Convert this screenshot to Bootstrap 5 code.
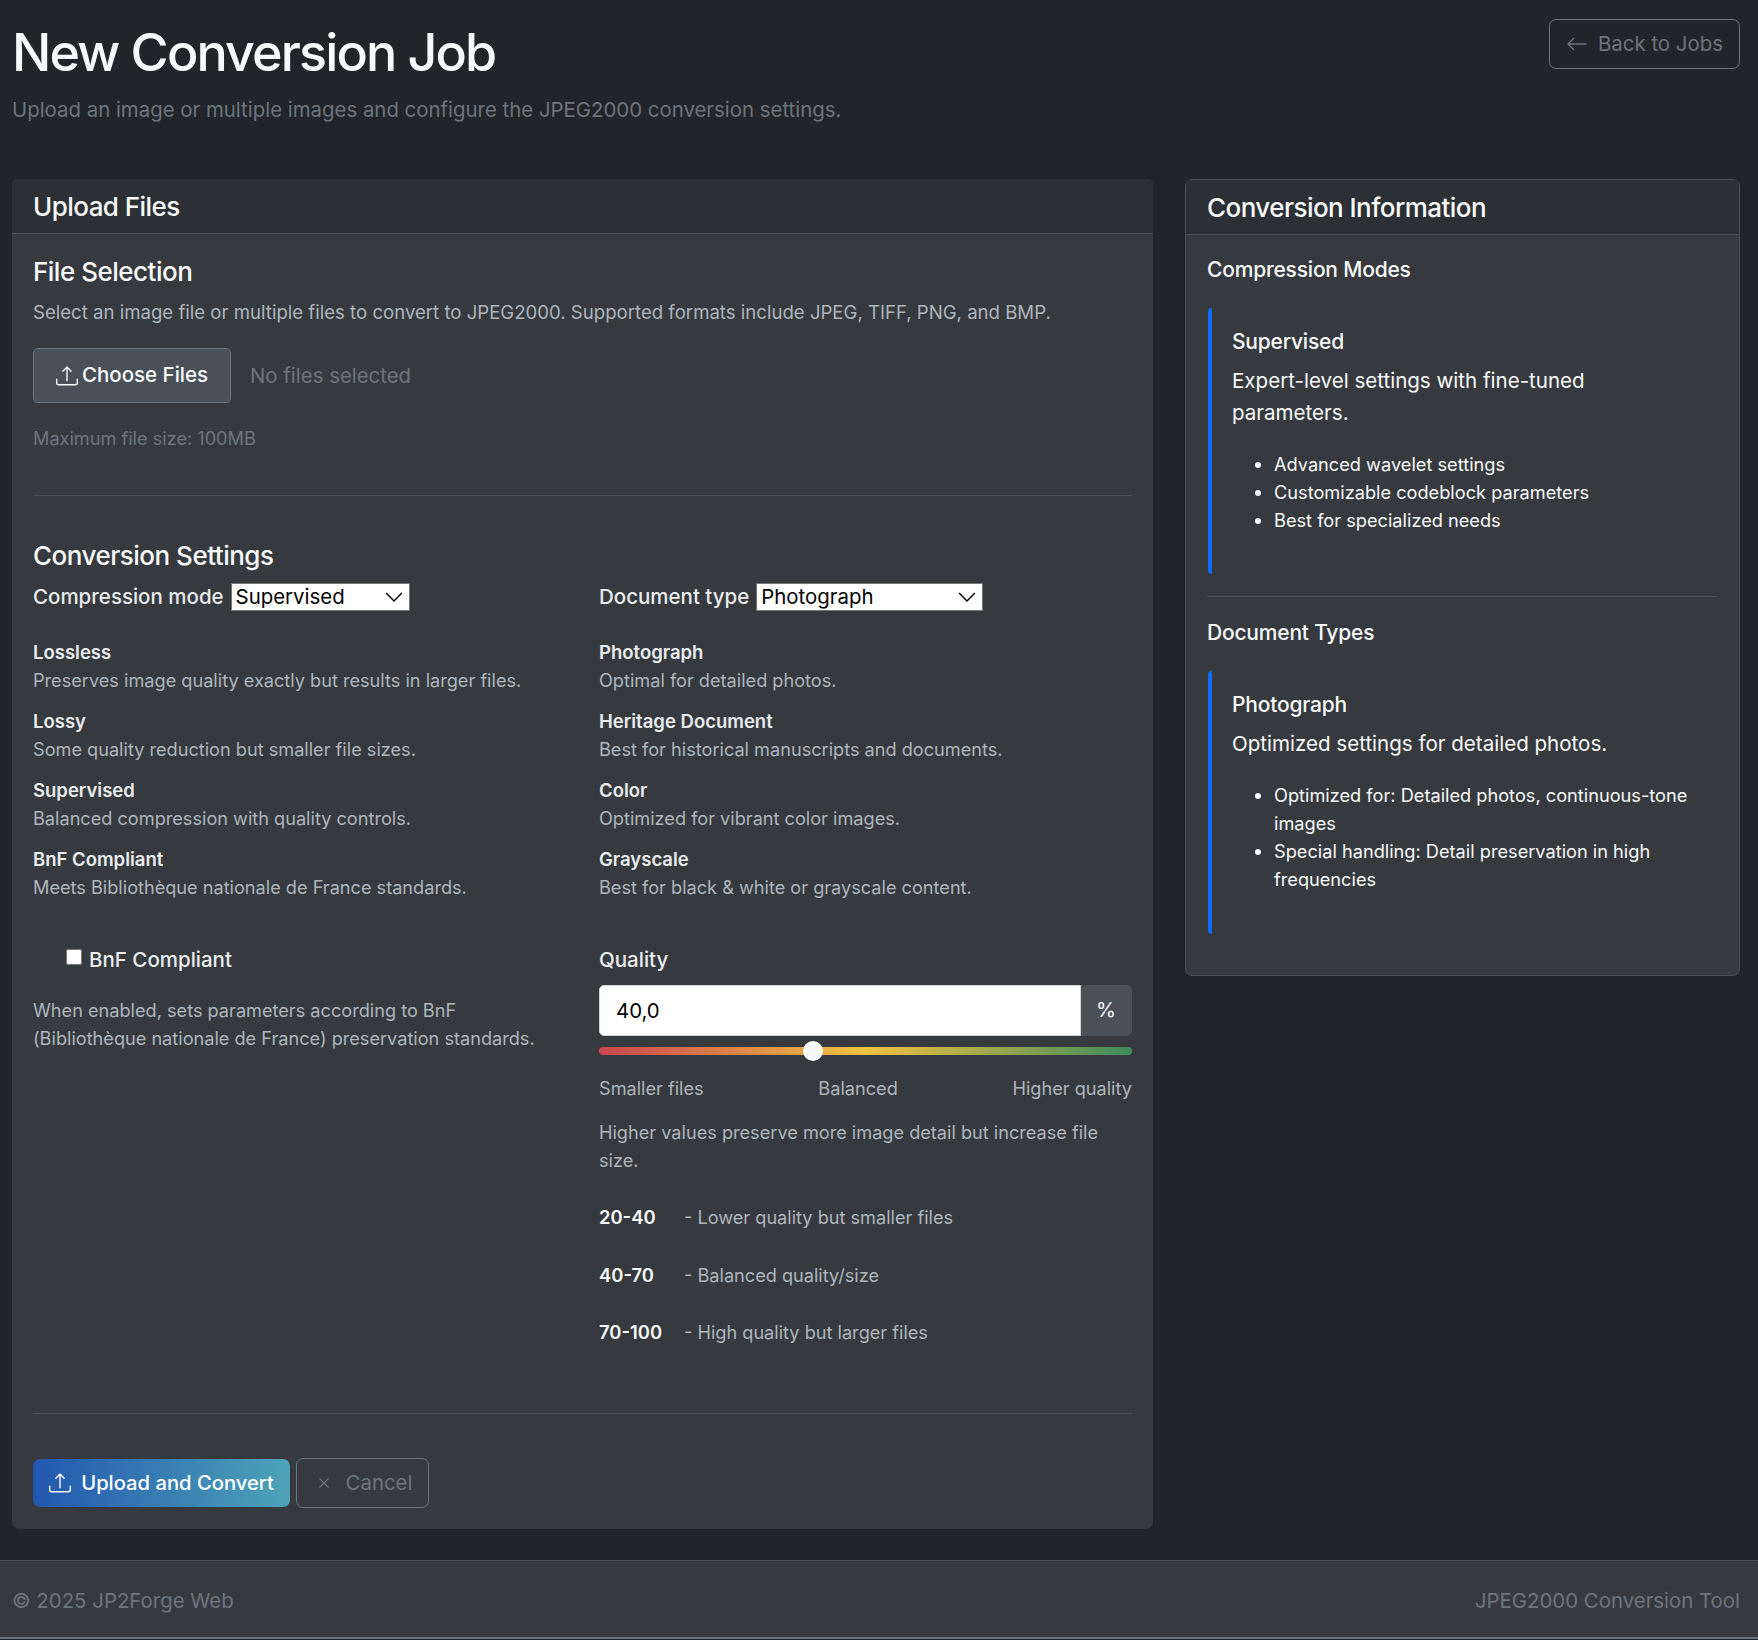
<!DOCTYPE html>
<html lang="en">
<head>
  <meta charset="UTF-8">
  <title>New Conversion Job</title>
  <meta name="viewport" content="width=device-width, initial-scale=1">
  <link href="https://cdn.jsdelivr.net/npm/bootstrap@5.3.0/dist/css/bootstrap.min.css" rel="stylesheet">
  <style>
    body { background: #212428; color: #f8f9fa; font-family: Inter, "Liberation Sans", sans-serif; font-size: 18.15px; line-height: 28px; }
    .page-wrap { padding: 19px 18px 31px 12px; }
    .page-head { height: 160px; }
    .page-title { font-size: 52px; font-weight: 500; line-height: 66px; margin: 1px 0 0; letter-spacing: -1.85px; }
    .page-sub { font-size: 20.4px; line-height: 30px; color: #6c757d; margin-top: 9px; }
    .back-btn { height: 50px; width: 191px; font-size: 20.4px; color: #6c757d; border-color: #6c757d; display: flex; align-items: center; justify-content: center; gap: 10px; border-radius: 7px; padding: 0; }
    .main-grid { display: grid; grid-template-columns: 1141px 555px; gap: 32px; align-items: start; }
    .panel { background: #363a3e; color: #f8f9fa; border-radius: 7px; --bs-card-border-color: transparent; border: 0; }
    .panel-side { border: 1px solid #495057; }
    .panel .card-header { background: #2c3034; border-bottom: 1px solid #495057; height: 55px; padding: 2px 21px 0; display: flex; align-items: center; font-size: 26px; font-weight: 500; letter-spacing: -.55px; }
    .panel .card-body { padding: 0 21px; }
    .sec-title { font-size: 26px; line-height: 32px; font-weight: 500; margin: 0; letter-spacing: -.5px; }
    .muted-text { color: #adb5bd; }
    .dim-text { color: #6c757d; }
    .choose-btn { background: #495057; border: 1px solid #6c757d; color: #f8f9fa; height: 55px; width: 198px; font-size: 20.5px; font-weight: 500; display: flex; align-items: center; justify-content: center; gap: 4px; padding: 0; border-radius: 5px; }
    .choose-btn:hover { background: #495057; color: #f8f9fa; }
    .no-files { font-size: 20.4px; color: #6c757d; margin-left: 3px; }
    .rule { border-top: 1px solid #495057; opacity: 1; margin: 0; }
    .set-label { font-size: 20.5px; font-weight: 500; color: #e9ecef; }
    .plain-select { appearance: none; -webkit-appearance: none; background: #fff url("data:image/svg+xml,%3csvg xmlns='http://www.w3.org/2000/svg' viewBox='0 0 16 16'%3e%3cpath fill='none' stroke='%23000' stroke-width='1.3' d='M1 4.5l7 7 7-7'/%3e%3c/svg%3e") no-repeat right 6px center / 18px 18px; border: 1px solid #767676; color: #000; font-family: Inter, "Liberation Sans", sans-serif; font-size: 20.4px; height: 28px; line-height: 26px; padding: 0 4px; border-radius: 0; margin-left: 7px; }
    .mode-select { width: 179px; }
    .doc-select { width: 227px; }
    .opt-list { margin-top: 27px; }
    .opt-item { height: 69px; }
    .opt-item b { display: block; font-size: 18.5px; font-weight: 600; color: #e9ecef; }
    .check-row { padding-left: 33px; height: 28px; }
    .check-box { width: 16px; height: 16px; margin: 0 7px 8px 0; vertical-align: middle; accent-color: #fff; }
    .quality-input { height: 51px; font-size: 20.4px; background: #fff; color: #000; border-radius: 5px 0 0 5px; border-color: #ced4da; padding-left: 16px; }
    .quality-unit { background: #495057; color: #f8f9fa; border-color: #495057; width: 52px; justify-content: center; font-size: 20.4px; padding: 0; border-radius: 0 5px 5px 0; }
    .quality-range { display: block; width: 100%; height: 20px; margin-top: 5px; appearance: none; -webkit-appearance: none; background: transparent; padding: 0; }
    .quality-range::-webkit-slider-runnable-track { height: 8px; border-radius: 4px; background: linear-gradient(to right, #c9454f, #f0c243 50%, #3f8a5c); }
    .quality-range::-webkit-slider-thumb { -webkit-appearance: none; appearance: none; width: 20px; height: 20px; margin-top: -6px; border-radius: 50%; background: #f8f9fa; border: 0; }
    .range-labels { margin-top: 13px; }
    .tier-row { height: 57.7px; display: flex; }
    .tier-row b { width: 85px; font-size: 18.4px; font-weight: 600; color: #f8f9fa; }
    .go-btn { height: 48px; width: 257px; background: linear-gradient(to right, #2257ae, #4ea3b8); color: #fff; border: 0; font-size: 20.2px; font-weight: 500; display: flex; align-items: center; justify-content: center; gap: 10px; padding: 0; border-radius: 7px; }
    .go-btn:hover { color: #fff; }
    .stop-btn { height: 50px; width: 133px; border: 1px solid #6c757d; color: #6c757d; background: transparent; font-size: 20.4px; display: flex; align-items: center; justify-content: center; gap: 11px; padding: 0; border-radius: 7px; margin-left: 6px; }
    .side-title { font-size: 21px; line-height: 28px; font-weight: 500; margin: 0; letter-spacing: -.2px; }
    .info-box { border-left: 4px solid #0d6efd; border-radius: 4px; padding: 20px 20px 0 20px; margin-left: 1px; }
    .info-box h6 { font-size: 21px; line-height: 28px; font-weight: 500; margin: 0 0 9px; letter-spacing: -.2px; }
    .info-box p { font-size: 20.55px; line-height: 32px; margin: 0 0 21px; }
    .info-box ul { margin: 0 -20px 0 0; padding-left: 42px; font-size: 18.2px; }
    .site-foot { background: #363a3e; border-top: 1px solid #495057; height: 79px; padding: 3px 6px 0 12px; font-size: 20.4px; color: #6c757d; display: flex; align-items: center; justify-content: space-between; border-bottom: 2px solid #6c757d; }
    .site-foot span:last-child { margin-right: 12px; }
    .file-sel { margin-top: 22px; }
    .file-desc { margin-top: 10px; font-size: 18.6px; }
    .file-row { margin-top: 22px; }
    .max-size { margin-top: 21px; }
    .first-rule { margin-top: 43px; }
    .conv-title { margin-top: 44px; }
    .settings-row { margin-top: 11px; display: grid; grid-template-columns: 566px 533px; }
    .left-col { padding-right: 46px; }
    .second-top { margin-top: 32px; }
    .bnf-note { margin-top: 22px; }
    .quality-group { margin-top: 11px; }
    .range-note { margin-top: 16px; }
    .tier-list { margin-top: 29px; }
    .last-rule { margin-top: 37px; }
    .action-row { margin-top: 44px; padding-bottom: 21px; }
    .side-body { padding-top: 21px !important; height: 740px; }
    .box-one { height: 266px; margin-top: 24px; }
    .side-rule { margin-top: 22px; }
    .side-rule + .side-title { margin-top: 22px; }
    .box-two { height: 263px; margin-top: 24px; }
  </style>
</head>
<body>
  <div class="page-wrap">
    <div class="page-head d-flex justify-content-between align-items-start">
      <div>
        <h1 class="page-title">New Conversion Job</h1>
        <div class="page-sub">Upload an image or multiple images and configure the JPEG2000 conversion settings.</div>
      </div>
      <a href="#" class="btn back-btn">
        <svg width="22" height="22" viewBox="0 0 16 16" fill="currentColor"><path fill-rule="evenodd" d="M15 8a.5.5 0 0 0-.5-.5H2.707l3.147-3.146a.5.5 0 1 0-.708-.708l-4 4a.5.5 0 0 0 0 .708l4 4a.5.5 0 0 0 .708-.708L2.707 8.5H14.5A.5.5 0 0 0 15 8z"/></svg>
        Back to Jobs
      </a>
    </div>

    <div class="main-grid">
      <!-- Upload form -->
      <div class="card panel">
        <div class="card-header">Upload Files</div>
        <div class="card-body">
          <h5 class="sec-title file-sel">File Selection</h5>
          <div class="muted-text file-desc">Select an image file or multiple files to convert to JPEG2000. Supported formats include JPEG, TIFF, PNG, and BMP.</div>
          <div class="d-flex align-items-center gap-3 file-row">
            <button class="btn choose-btn" type="button">
              <svg width="22" height="22" viewBox="0 0 16 16" fill="currentColor"><path d="M.5 9.9a.5.5 0 0 1 .5.5v2.5a1 1 0 0 0 1 1h12a1 1 0 0 0 1-1v-2.5a.5.5 0 0 1 1 0v2.5a2 2 0 0 1-2 2H2a2 2 0 0 1-2-2v-2.5a.5.5 0 0 1 .5-.5z"/><path d="M7.646 1.146a.5.5 0 0 1 .708 0l3 3a.5.5 0 0 1-.708.708L8.5 2.707V11.5a.5.5 0 0 1-1 0V2.707L5.354 4.854a.5.5 0 1 1-.708-.708l3-3z"/></svg>
              Choose Files
            </button>
            <span class="no-files">No files selected</span>
          </div>
          <div class="dim-text max-size">Maximum file size: 100MB</div>
          <hr class="rule first-rule">
          <h5 class="sec-title conv-title">Conversion Settings</h5>

          <div class="row g-0 settings-row">
            <div class="left-col">
              <div class="d-flex align-items-center"><span class="set-label">Compression mode</span>
                <select class="plain-select mode-select"><option>Supervised</option></select></div>
              <div class="opt-list">
                <div class="opt-item"><b>Lossless</b><span class="muted-text">Preserves image quality exactly but results in larger files.</span></div>
                <div class="opt-item"><b>Lossy</b><span class="muted-text">Some quality reduction but smaller file sizes.</span></div>
                <div class="opt-item"><b>Supervised</b><span class="muted-text">Balanced compression with quality controls.</span></div>
                <div class="opt-item"><b>BnF Compliant</b><span class="muted-text">Meets Bibliothèque nationale de France standards.</span></div>
              </div>
              <div class="check-row set-label second-top"><input type="checkbox" class="check-box">BnF Compliant</div>
              <div class="muted-text bnf-note">When enabled, sets parameters according to BnF (Bibliothèque nationale de France) preservation standards.</div>
            </div>
            <div class="right-col">
              <div class="d-flex align-items-center"><span class="set-label">Document type</span>
                <select class="plain-select doc-select"><option>Photograph</option></select></div>
              <div class="opt-list">
                <div class="opt-item"><b>Photograph</b><span class="muted-text">Optimal for detailed photos.</span></div>
                <div class="opt-item"><b>Heritage Document</b><span class="muted-text">Best for historical manuscripts and documents.</span></div>
                <div class="opt-item"><b>Color</b><span class="muted-text">Optimized for vibrant color images.</span></div>
                <div class="opt-item"><b>Grayscale</b><span class="muted-text">Best for black &amp; white or grayscale content.</span></div>
              </div>
              <div class="set-label second-top">Quality</div>
              <div class="input-group quality-group">
                <input type="text" class="form-control quality-input" value="40,0">
                <span class="input-group-text quality-unit">%</span>
              </div>
              <input type="range" class="quality-range" min="0" max="100" step="0.1" value="39.7">
              <div class="d-flex justify-content-between muted-text range-labels">
                <span>Smaller files</span><span class="mid-label">Balanced</span><span>Higher quality</span>
              </div>
              <div class="muted-text range-note">Higher values preserve more image detail but increase file size.</div>
              <div class="tier-list">
                <div class="tier-row"><b>20-40</b><span class="muted-text">- Lower quality but smaller files</span></div>
                <div class="tier-row"><b>40-70</b><span class="muted-text">- Balanced quality/size</span></div>
                <div class="tier-row"><b>70-100</b><span class="muted-text">- High quality but larger files</span></div>
              </div>
            </div>
          </div>

          <hr class="rule last-rule">
          <div class="d-flex align-items-center action-row">
            <button class="btn go-btn" type="button">
              <svg width="22" height="22" viewBox="0 0 16 16" fill="currentColor"><path d="M.5 9.9a.5.5 0 0 1 .5.5v2.5a1 1 0 0 0 1 1h12a1 1 0 0 0 1-1v-2.5a.5.5 0 0 1 1 0v2.5a2 2 0 0 1-2 2H2a2 2 0 0 1-2-2v-2.5a.5.5 0 0 1 .5-.5z"/><path d="M7.646 1.146a.5.5 0 0 1 .708 0l3 3a.5.5 0 0 1-.708.708L8.5 2.707V11.5a.5.5 0 0 1-1 0V2.707L5.354 4.854a.5.5 0 1 1-.708-.708l3-3z"/></svg>
              Upload and Convert
            </button>
            <a href="#" class="btn stop-btn">
              <svg width="22" height="22" viewBox="0 0 16 16" fill="currentColor"><path d="M4.646 4.646a.5.5 0 0 1 .708 0L8 7.293l2.646-2.647a.5.5 0 0 1 .708.708L8.707 8l2.647 2.646a.5.5 0 0 1-.708.708L8 8.707l-2.646 2.647a.5.5 0 0 1-.708-.708L7.293 8 4.646 5.354a.5.5 0 0 1 0-.708z"/></svg>
              Cancel
            </a>
          </div>
        </div>
      </div>

      <!-- Side information -->
      <div class="card panel panel-side">
        <div class="card-header">Conversion Information</div>
        <div class="card-body side-body">
          <h6 class="side-title">Compression Modes</h6>
          <div class="info-box box-one">
            <h6>Supervised</h6>
            <p>Expert-level settings with fine-tuned parameters.</p>
            <ul>
              <li>Advanced wavelet settings</li>
              <li>Customizable codeblock parameters</li>
              <li>Best for specialized needs</li>
            </ul>
          </div>
          <hr class="rule side-rule">
          <h6 class="side-title">Document Types</h6>
          <div class="info-box box-two">
            <h6>Photograph</h6>
            <p>Optimized settings for detailed photos.</p>
            <ul>
              <li>Optimized for: Detailed photos, continuous-tone images</li>
              <li>Special handling: Detail preservation in high frequencies</li>
            </ul>
          </div>
        </div>
      </div>
    </div>
  </div>

  <footer class="site-foot">
    <span>© 2025 JP2Forge Web</span>
    <span>JPEG2000 Conversion Tool</span>
  </footer>

  <script src="https://cdn.jsdelivr.net/npm/bootstrap@5.3.0/dist/js/bootstrap.bundle.min.js"></script>
</body>
</html>
